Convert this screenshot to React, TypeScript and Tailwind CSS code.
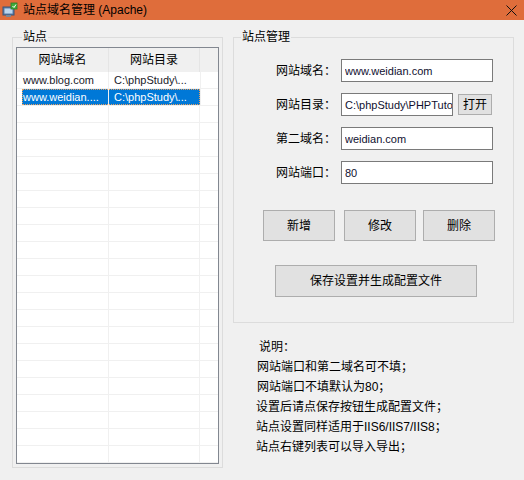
import React from "react";

const rows = [
  { name: "www.blog.com", dir: "C:\\phpStudy\\...", selected: false },
  { name: "www.weidian....", dir: "C:\\phpStudy\\...", selected: true },
];

const notes = [
  { text: "说明：", indent: "pl-[3px]" },
  { text: "网站端口和第二域名可不填；", indent: "pl-[1px]" },
  { text: "网站端口不填默认为80；", indent: "pl-[1px]" },
  { text: "设置后请点保存按钮生成配置文件；", indent: "" },
  { text: "站点设置同样适用于IIS6/IIS7/IIS8；", indent: "" },
  { text: "站点右键列表可以导入导出；", indent: "" },
];

function AppIcon() {
  return (
    <svg width="16" height="16" viewBox="0 0 16 16">
      <rect x="1" y="5" width="11" height="8" fill="#5b7fa8" stroke="#3a5578" strokeWidth="1" />
      <rect x="2.5" y="6.5" width="8" height="5" fill="#bcd6ee" />
      <rect x="4" y="13" width="5" height="2" fill="#7b8896" />
      <rect x="9" y="1" width="6" height="6" fill="#3fae3a" stroke="#2b7a28" strokeWidth="0.8" />
      <path d="M10.5 4 L12 5.5 L14 2.5" stroke="#fff" strokeWidth="1" fill="none" />
    </svg>
  );
}

function Field({
  label,
  value,
  width = "w-[152px]",
  children,
}: {
  label: string;
  value: string;
  width?: string;
  children?: React.ReactNode;
}) {
  return (
    <div className="flex items-center h-[23px] pl-[42px]">
      <span className="w-[65px] text-[12px] text-black">{label}</span>
      <input
        readOnly
        value={value}
        className={`${width} h-[23px] border border-[#7a7a7a] bg-white pl-[3px] text-[11px] text-[#101030] outline-none`}
      />
      {children}
    </div>
  );
}

function WinButton({ label, className }: { label: string; className: string }) {
  return (
    <button
      className={`${className} border border-[#adadad] bg-[#e1e1e1] text-[12px] text-black flex items-center justify-center`}
    >
      {label}
    </button>
  );
}

export default function App() {
  const emptyRows = Array.from({ length: 22 });
  return (
    <div className="w-[524px] h-[480px] bg-[#f0f0f0] flex flex-col overflow-hidden font-['Liberation_Sans','Noto_Sans_CJK_SC',sans-serif]">
      <div className="h-[20px] bg-[#df6d3b] flex items-center justify-between pl-[2px] pr-[7px]">
        <div className="flex items-center gap-[5px]">
          <AppIcon />
          <span className="text-[12px] text-black leading-none">站点域名管理 (Apache)</span>
        </div>
        <svg width="11" height="11" viewBox="0 0 11 11">
          <path d="M0.5 0.5 L10.5 10.5 M10.5 0.5 L0.5 10.5" stroke="#111" strokeWidth="1" />
        </svg>
      </div>

      <div className="flex pt-[10px] pl-[12px]">
        <fieldset className="w-[211px] h-[438px] border border-[#dcdcdc] px-[3px] pt-[3px] pb-[3px]">
          <legend className="ml-[6px] px-[1px] text-[12px] leading-[14px] text-black">站点</legend>
          <div className="h-[417px] border border-[#828790] bg-white overflow-hidden flex flex-col">
            <div className="h-[24px] flex bg-[#f0f0f0] shrink-0 text-[12px] text-black">
              <div className="w-[92px] border-r border-[#e5e5e5] flex items-center justify-center">网站域名</div>
              <div className="w-[91px] border-r border-[#e5e5e5] flex items-center justify-center">网站目录</div>
              <div className="flex-1" />
            </div>
            {rows.map((r) => (
              <div key={r.name} className="h-[17px] flex shrink-0 border-b border-[#f0f0f0] text-[11px]">
                <div className="w-[5px]" />
                <div
                  className={`flex w-[178px] ${
                    r.selected ? "bg-[#0078d7] text-white outline-1 outline-dotted outline-[#e8a060] -outline-offset-1" : "text-[#1a1a2a]"
                  }`}
                >
                  <div className="w-[87px] border-r border-[#f0f0f0] pl-[1px] flex items-center whitespace-nowrap overflow-hidden">
                    {r.name}
                  </div>
                  <div className="w-[91px] pl-[5px] flex items-center whitespace-nowrap overflow-hidden">
                    {r.dir}
                  </div>
                </div>
                <div className="flex-1 border-l border-[#f0f0f0]" />
              </div>
            ))}
            {emptyRows.map((_, i) => (
              <div key={i} className="h-[17px] flex shrink-0 border-b border-[#f0f0f0]">
                <div className="w-[92px] border-r border-[#f0f0f0]" />
                <div className="w-[91px] border-r border-[#f0f0f0]" />
                <div className="flex-1" />
              </div>
            ))}
          </div>
        </fieldset>

        <div className="ml-[10px] w-[281px] flex flex-col">
          <fieldset className="h-[293px] border border-[#dcdcdc] pt-[15px]">
            <legend className="ml-[7px] px-[1px] text-[12px] leading-[14px] text-black">站点管理</legend>
            <div className="flex flex-col gap-[11px]">
              <Field label="网站域名：" value="www.weidian.com" />
              <Field label="网站目录：" value="C:\phpStudy\PHPTutorial\WWW" width="w-[112px]">
                <WinButton label="打开" className="ml-[5px] w-[34px] h-[21px]" />
              </Field>
              <Field label="第二域名：" value="weidian.com" />
              <Field label="网站端口：" value="80" />
            </div>
            <div className="flex mt-[26px] pl-[29px]">
              <WinButton label="新增" className="w-[72px] h-[31px]" />
              <WinButton label="修改" className="ml-[9px] w-[72px] h-[31px]" />
              <WinButton label="删除" className="ml-[7px] w-[72px] h-[31px]" />
            </div>
            <WinButton label="保存设置并生成配置文件" className="mt-[24px] ml-[41px] w-[202px] h-[32px]" />
          </fieldset>

          <div className="mt-[14px] pl-[23px] flex flex-col text-[12px] leading-[20px] text-black">
            {notes.map((n) => (
              <div key={n.text} className={n.indent}>
                {n.text}
              </div>
            ))}
          </div>
        </div>
      </div>
    </div>
  );
}
